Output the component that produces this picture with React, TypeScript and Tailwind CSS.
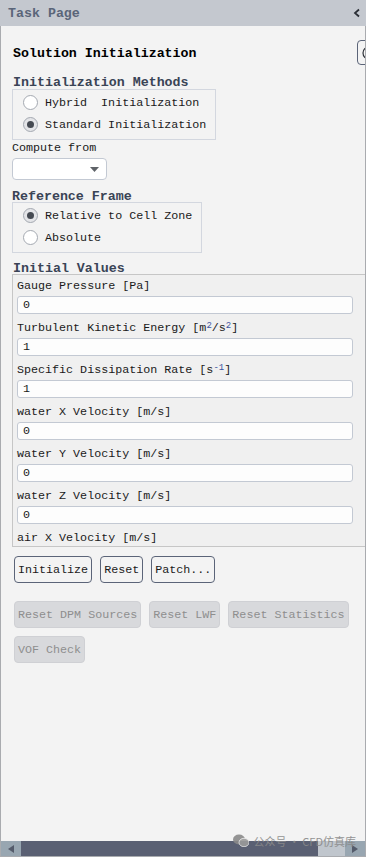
import React from "react";

const mono = { fontFamily: '"Liberation Mono", "DejaVu Sans Mono", monospace' };

function Radio({ checked, label }: { checked?: boolean; label: string }) {
  return (
    <div className="flex h-[22px] items-center">
      <div
        className={`ml-[10px] flex h-[15px] w-[15px] items-center justify-center rounded-full border border-[#a4a9b1] ${
          checked ? "bg-[#e4e5e8]" : "bg-white"
        }`}
      >
        {checked && <div className="h-[7px] w-[7px] rounded-full bg-[#454a52]" />}
      </div>
      <span className="ml-[7px] whitespace-pre pt-[2px] text-[11.7px] leading-[14px] text-[#1a1a1a]">{label}</span>
    </div>
  );
}

function ValueRow({ label, value }: { label: React.ReactNode; value: string }) {
  return (
    <div className="mb-[4px] flex flex-col">
      <div className="flex h-[20px] items-center whitespace-pre pt-[2px] text-[11.7px] text-[#1a1a1a]">{label}</div>
      <div className="flex h-[18px] w-[336px] items-center rounded-[3px] border border-[#c3c9d3] bg-[#fdfdfd] pl-[5px] pt-[1px] text-[11.7px] text-[#1a1a1a]">
        {value}
      </div>
    </div>
  );
}

function Btn({ children, disabled }: { children: React.ReactNode; disabled?: boolean }) {
  return (
    <button
      className={`flex h-[27px] items-center whitespace-pre rounded-[4px] border px-[3px] pt-[1px] text-[11.7px] leading-[14px] ${
        disabled
          ? "border-[#cfd0d4] bg-[#d8d9dc] text-[#8e8e8e]"
          : "border-[#5b6478] bg-[#f3f3f3] text-[#1a1a1a]"
      }`}
    >
      {children}
    </button>
  );
}

const sup = "text-[9px] text-[#3d55a0] leading-none relative -top-[3px]";

export default function App() {
  const rows: { label: React.ReactNode; value: string }[] = [
    { label: "Gauge Pressure [Pa]", value: "0" },
    {
      label: (
        <>
          Turbulent Kinetic Energy [m<span className={sup}>2</span>/s<span className={sup}>2</span>]
        </>
      ),
      value: "1",
    },
    {
      label: (
        <>
          Specific Dissipation Rate [s<span className={sup}>-1</span>]
        </>
      ),
      value: "1",
    },
    { label: "water X Velocity [m/s]", value: "0" },
    { label: "water Y Velocity [m/s]", value: "0" },
    { label: "water Z Velocity [m/s]", value: "0" },
    { label: "air X Velocity [m/s]", value: "0" },
  ];

  return (
    <div style={mono} className="relative flex h-[857px] w-[366px] flex-col overflow-hidden bg-[#f3f3f3]">
      {/* header */}
      <div className="flex h-[26px] shrink-0 items-center justify-between bg-[#c4c8cf] pl-[8px] pr-[5px]">
        <span className="pt-[1px] text-[13.3px] font-bold text-[#5a6579]">Task Page</span>
        <svg width="8" height="10" viewBox="0 0 8 10">
          <polyline points="6,1.5 2,5 6,8.5" fill="none" stroke="#2b2f36" strokeWidth="1.8" />
        </svg>
      </div>

      <div className="flex flex-1 flex-col overflow-hidden border-x border-b border-[#a9abaf]">
        <div className="flex flex-1 flex-col overflow-hidden">
          {/* title row */}
          <div className="mt-[14px] flex h-[25px] items-center justify-between pl-[12px]">
            <span className="pt-[3px] text-[13.3px] font-bold text-black">Solution Initialization</span>
            <div className="mr-[-16px] flex h-[25px] w-[24px] items-center justify-center rounded-[4px] border border-[#5b6478] bg-[#f3f3f3]">
              <svg width="14" height="14" viewBox="0 0 14 14">
                <circle cx="7" cy="7" r="6" fill="none" stroke="#2b2f36" strokeWidth="1.2" />
              </svg>
            </div>
          </div>

          {/* init methods */}
          <div className="mt-[8px] h-[16px] pl-[12px] pt-[2px] text-[13.3px] font-bold leading-[16px] text-[#3a4456]">
            Initialization Methods
          </div>
          <div className="ml-[11px] flex w-[204px] flex-col border border-[#d3d7df] pb-[4px] pt-[1px]">
            <Radio label="Hybrid  Initialization" />
            <Radio checked label="Standard Initialization" />
          </div>

          <div className="h-[14px] pl-[11px] pt-[1px] text-[11.7px] leading-[14px] text-[#1a1a1a]">Compute from</div>
          <div className="ml-[11px] mt-[4px] flex h-[22px] w-[95px] items-center justify-end rounded-[4px] border border-[#c3c9d3] bg-white pr-[7px]">
            <svg width="9" height="5" viewBox="0 0 9 5">
              <polygon points="0,0 9,0 4.5,5" fill="#5f6368" />
            </svg>
          </div>

          {/* reference frame */}
          <div className="mt-[7px] h-[15px] pl-[11px] pt-[2px] text-[13.3px] font-bold leading-[15px] text-[#3a4456]">
            Reference Frame
          </div>
          <div className="ml-[11px] flex w-[190px] flex-col border border-[#d3d7df] pb-[4px] pt-[1px]">
            <Radio checked label="Relative to Cell Zone" />
            <Radio label="Absolute" />
          </div>

          {/* initial values */}
          <div className="mt-[7px] h-[14px] pl-[12px] pt-[2px] text-[13.3px] font-bold leading-[14px] text-[#3a4456]">
            Initial Values
          </div>
          <div className="ml-[11px] flex h-[273px] shrink-0 flex-col overflow-hidden border-y border-l border-[#c6c6c6] bg-[#f0f0f0] pl-[4px] pt-[1px]">
            {rows.map((r, i) => (
              <ValueRow key={i} label={r.label} value={r.value} />
            ))}
          </div>

          {/* buttons */}
          <div className="ml-[13px] mt-[9px] flex gap-[8px]">
            <Btn>Initialize</Btn>
            <Btn>Reset</Btn>
            <Btn>Patch...</Btn>
          </div>
          <div className="ml-[13px] mt-[18px] flex gap-[8px]">
            <Btn disabled>Reset DPM Sources</Btn>
            <Btn disabled>Reset LWF</Btn>
            <Btn disabled>Reset Statistics</Btn>
          </div>
          <div className="ml-[13px] mt-[8px] flex gap-[8px]">
            <Btn disabled>VOF Check</Btn>
          </div>
        </div>

        {/* horizontal scrollbar */}
        <div className="flex h-[15px] shrink-0">
          <div className="flex w-[20px] items-center justify-center bg-[#98a6b1]">
            <svg width="6" height="8" viewBox="0 0 6 8">
              <polygon points="6,0 6,8 0,4" fill="#545b6b" />
            </svg>
          </div>
          <div className="w-[297px] bg-[#5a6073]" />
          <div className="flex-1 bg-[#c0c6cd]" />
          <div className="flex w-[20px] items-center justify-center bg-[#98a6b1]">
            <svg width="6" height="8" viewBox="0 0 6 8">
              <polygon points="0,0 0,8 6,4" fill="#545b6b" />
            </svg>
          </div>
        </div>
      </div>

      {/* watermark */}
      <div
        className="pointer-events-none absolute bottom-[8px] right-[10px] flex items-center gap-[4px] text-[11px] text-[#8a8a8a] opacity-90"
        style={{ fontFamily: '"Noto Sans CJK SC", "Noto Sans", sans-serif' }}
      >
        <svg width="16" height="13" viewBox="0 0 16 13">
          <ellipse cx="6" cy="5.5" rx="6" ry="5" fill="#8a8a8a" />
          <ellipse cx="11" cy="8.5" rx="5" ry="4.2" fill="#9a9a9a" stroke="#f3f3f3" strokeWidth="0.8" />
        </svg>
        <span>公众号 · CFD仿真库</span>
      </div>
    </div>
  );
}
